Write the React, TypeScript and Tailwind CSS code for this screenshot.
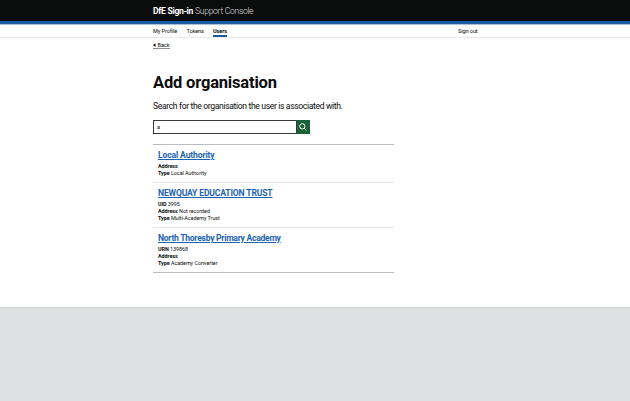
import React from "react";

type Detail = { label: string; value?: string };
type Organisation = { name: string; nameClass: string; rowClass: string; details: Detail[] };

const organisations: Organisation[] = [
  {
    name: "Local Authority",
    nameClass: "tracking-[-0.15px]",
    rowClass: "h-[38px] border-b border-[#e4e5e6]",
    details: [{ label: "Address" }, { label: "Type", value: "Local Authority" }],
  },
  {
    name: "NEWQUAY EDUCATION TRUST",
    nameClass: "tracking-[-0.17px]",
    rowClass: "h-[45px] border-b border-[#e4e5e6]",
    details: [
      { label: "UID", value: "3995" },
      { label: "Address", value: "Not recorded" },
      { label: "Type", value: "Multi-Academy Trust" },
    ],
  },
  {
    name: "North Thoresby Primary Academy",
    nameClass: "tracking-[-0.28px]",
    rowClass: "h-[45px] border-b border-[#b9bbbc]",
    details: [
      { label: "URN", value: "139868" },
      { label: "Address" },
      { label: "Type", value: "Academy Converter" },
    ],
  },
];

function Header() {
  return (
    <header className="h-6 border-b-[3px] border-[#1d5ba3] bg-[#0b0c0c] pl-[153px] text-[8.6px] leading-[22px] tracking-[-0.3px] whitespace-nowrap text-white">
      <span className="font-bold">DfE Sign-in</span>{" "}
      <span className="font-light text-[#dedfdf]">Support Console</span>
    </header>
  );
}

function Nav() {
  return (
    <nav className="flex h-3.5 border-t border-b border-t-[#a5c0dc] border-b-[#e8e8e9] pl-[153px] text-[5.6px] leading-[12px] tracking-[-0.1px] whitespace-nowrap">
      <a className="w-[33.5px]">My Profile</a>
      <a className="w-[26.5px]">Tokens</a>
      <a className="h-3 w-3.5 border-b-2 border-[#1d5ba3] font-bold">Users</a>
      <a className="ml-[231px]">Sign out</a>
    </nav>
  );
}

function Search() {
  return (
    <div className="mt-[8px] flex h-[14px] w-[157px]">
      <div className="h-[14px] w-36 border border-[#393a3a] pl-[3px] text-[5.5px] leading-[12px]">a</div>
      <button className="flex h-[14px] w-[13px] items-center justify-center bg-[#1b6336] pr-px pb-px">
        <svg viewBox="0 0 14 14" className="h-[8px] w-[8px]" fill="none" stroke="#fff" strokeWidth="1.7">
          <circle cx="5.8" cy="5.8" r="4.6" />
          <path d="M9.2 9.2 13 13" />
        </svg>
      </button>
    </div>
  );
}

export default function App() {
  return (
    <div className="h-[401px] w-[630px] overflow-hidden bg-[#dee0e2] font-['Roboto','Liberation_Sans',sans-serif] text-[#0b0c0c]">
      <div className="h-[308px] border-b border-[#d0d2d4] bg-white">
        <Header />
        <Nav />
        <main className="w-[394px] pl-[153px] whitespace-nowrap">
          <div className="flex h-[11px] w-[17px] items-center border-b border-[#8b8c8c] pt-[3px] text-[5.6px] leading-[8px] tracking-[-0.1px]">
            <svg viewBox="0 0 4 6" className="mr-[2px] h-[4px] w-[2.5px]">
              <path d="M4 0 0 3 4 6Z" fill="#0b0c0c" />
            </svg>
            <span>Back</span>
          </div>
          <h1 className="mt-[23px] h-5 text-[16.5px] leading-[21px] font-bold tracking-[-0.18px]">Add organisation</h1>
          <p className="mt-[9px] h-[11px] text-[8.6px] leading-[11px] tracking-[-0.36px]">Search for the organisation the user is associated with.</p>
          <Search />
          <ul className="mt-[10px] border-t border-[#b9bbbc]">
            {organisations.map((o) => (
              <li key={o.name} className={`pt-[4px] pl-[5px] ${o.rowClass}`}>
                <h2 className={`h-[13px] text-[8.6px] leading-[12px] font-bold text-[#1d65b0] ${o.nameClass}`}>
                  <a className="underline decoration-1 underline-offset-1">{o.name}</a>
                </h2>
                {o.details.map((d) => (
                  <div key={d.label} className="h-[7px] text-[5.4px] leading-[8px] tracking-[-0.04px]">
                    <b>{d.label}</b> {d.value}
                  </div>
                ))}
              </li>
            ))}
          </ul>
        </main>
      </div>
    </div>
  );
}
